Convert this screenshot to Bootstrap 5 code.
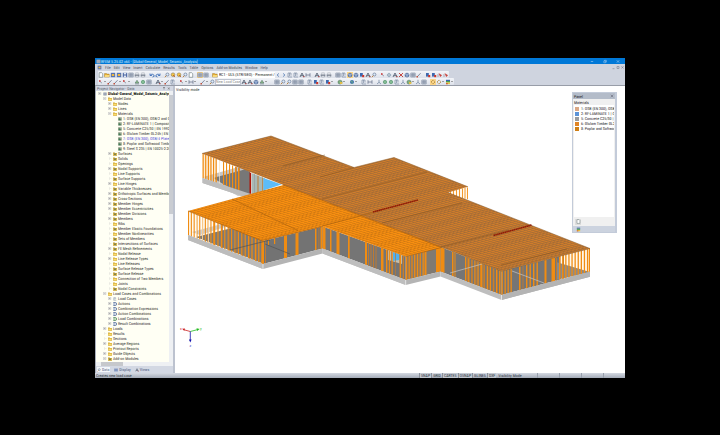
<!DOCTYPE html>
<html lang="en">
<head>
<meta charset="utf-8">
<meta name="viewport" content="width=device-width, initial-scale=1">
<title>RFEM - Seismic Analysis</title>
<link rel="stylesheet" href="https://cdn.jsdelivr.net/npm/bootstrap@5.3.0/dist/css/bootstrap.min.css">
<style>
body{background:#000;font:4px/5px "Roboto Condensed","Noto Sans CJK SC",sans-serif;color:#222;padding:58px 95px 57px;text-rendering:geometricPrecision}
button,select{font:inherit;color:inherit;border:0;background:none;padding:0;display:flex;align-items:center;justify-content:center}
.app-win{background:#cfd4df}
.title-bar{background:#0078d7;color:#d9ecfb;height:6px;padding:0 5px 0 1px}
.title-bar svg{width:5px;height:5px}
.win-btn{width:4px;height:5px}
.win-btns{gap:9px}
.menu-bar{height:7px;padding:0 1px 0 2px;gap:3px;color:#4b5060;white-space:nowrap}
.menu-bar a{color:inherit;text-decoration:none}
.tool-row{height:7px;padding-left:3px}
.tool-strip{background:linear-gradient(#f3f5f9,#dde1ea);height:7px;border-radius:1px}
.tool-btn{width:6px;height:6px}
.tool-btn svg{width:6px;height:6px}
.tool-btn.is-on{background:#fbd58a}
.tool-gap{width:3px}
.tool-arrow{width:3px;height:6px;align-items:center}
.tool-arrow::after{content:"";border:1px solid transparent;border-top-color:#555;margin-top:1px}
.case-select{appearance:none;background:#fff;width:57px;height:6px;line-height:5px;padding-left:1px;overflow:hidden}
.new-select{appearance:none;background:#fff;width:26px;height:6px;color:#888;border:1px solid #bfc4cf;line-height:4px}
.work-row{border-top:1px solid #989da8;min-height:0}
.nav-dock{width:78px;background:#d3d8e3;border-left:1px solid #a9aebb}
.dock-head{height:5px;padding:0 3px 0 1px;color:#555b6b}
.tree-box{background:#fffff4;min-height:0}
.tree{padding:0 0 1px;margin:0;list-style:none;overflow:hidden}
.tree li{flex:1 1 0;min-height:0;white-space:nowrap;overflow:hidden;gap:1px;color:#33332f;padding-left:2px}
.tree .lv1{padding-left:7px}
.tree .lv2{padding-left:12px}
.tree .lv3{padding-left:17px}
.tree svg{width:4px;height:4px;flex:none}
.tree .expander{width:4px;height:3px;flex:none}
.tree .root-item{font-weight:bold;color:#111}
.tree .is-sel{color:#4a46d8}
.v-bar{width:4px;background:#eef0f3}
.v-thumb{background:#c9ccd2;height:119px;margin-top:4px}
.h-bar{height:4px;background:#eef0f3;padding-left:5px}
.h-thumb{background:#c6c8cc;width:22px}
.dock-tabs{height:7px;padding-left:1px;color:#4a5a80;gap:4px}
.dock-tabs svg{width:4px;height:4px;margin-right:1px}
.dock-tabs .on{background:#f4f6fa;padding-right:1px}
.splitter{width:2px;background:#bcc2cf}
.view-area{background:#fff;min-width:0}
.view-note{left:1px;top:1px;color:#333}
.mat-panel{right:8px;top:6px;width:45px;height:141px;background:#f0f0f0;border:1px solid #c3cbd9;border-right-width:2px}
.mat-head{height:6px;background:#b4bcc9;padding:0 1px}
.mat-list{background:#fff;margin:0 1px;padding:1px 0 0 1px;list-style:none;overflow:hidden}
.mat-list li{height:5px;gap:2px;white-space:nowrap}
.mat-label{height:6px;padding-left:1px;line-height:7px}
.swatch{width:4px;height:4px;flex:none}
.sw-a{background:#dba886}.sw-b{background:#5b93d8}.sw-c{background:#989ba0}.sw-d{background:#e08426}.sw-e{background:#cf7f16}
.mat-tools{height:9px;padding-left:2px}
.mat-tools button{width:6px;height:6px;background:#ddd}
.mat-foot{height:6px;background:#ccd3df;padding-left:3px}
.mat-foot svg,.mat-tools svg{width:5px;height:5px}
.status-bar{height:5px;background:linear-gradient(#d5dae2,#a4abb8);color:#333a46;line-height:5px;white-space:nowrap}
.status-bar .hint{width:324px;padding-left:1px}
.status-bar button{border:1px solid #8b919c;border-width:0 0 0 1px;height:5px;padding:0 1px}
.status-bar .down{background:#c3c8d0}
.mode-note{padding-left:2px}
.seg{width:22px;border-left:1px solid #98a0ad;height:5px}
</style>
<script src="https://cdn.jsdelivr.net/npm/bootstrap@5.3.0/dist/js/bootstrap.bundle.min.js"></script>
</head>
<body class="vh-100 overflow-hidden">
<svg class="d-none">
  <symbol id="page" viewBox="0 0 6 6"><path d="M1.2.7h2.5l1 1v3.6H1.2z" fill="#fff" stroke="#677" stroke-width=".6"/></symbol>
  <symbol id="open" viewBox="0 0 6 6"><path d="M.5 1.5h2l.5.6h2.2v3H.5z" fill="#e6ad32" stroke="#947024" stroke-width=".4"/><path d="M1.2 3h4.4l-.8 2.1H.5z" fill="#f8d97a"/></symbol>
  <symbol id="dlubal" viewBox="0 0 6 6"><path d="M.8.8h4.4v4.4H.8z" fill="#5674b4"/><path d="M1.8 2h2.4v2H1.8z" fill="#f0b73c"/></symbol>
  <symbol id="save" viewBox="0 0 6 6"><path d="M.8.8h4.4v4.4H.8z" fill="#45619f"/><path d="M1.8.8h2.4v1.6H1.8zM1.8 3.6h2.4v1.6H1.8z" fill="#dfe6f2"/></symbol>
  <symbol id="print" viewBox="0 0 6 6"><path d="M.7 2.4h4.6v2H.7z" fill="#7d8594"/><path d="M1.7.8h2.6v1.6H1.7zM1.7 3.8h2.6v1.4H1.7z" fill="#f5f7fa" stroke="#6b7382" stroke-width=".3"/></symbol>
  <symbol id="undo" viewBox="0 0 6 6"><path d="M1 1.5v2h2M1.2 3.2Q3 1 4.7 2.8T3.5 5" fill="none" stroke="#3467b4" stroke-width=".8"/></symbol>
  <symbol id="redo" viewBox="0 0 6 6"><path d="M5 1.5v2H3M4.8 3.2Q3 1 1.3 2.8T2.5 5" fill="none" stroke="#3467b4" stroke-width=".8"/></symbol>
  <symbol id="lens" viewBox="0 0 6 6"><circle cx="3.4" cy="2.5" r="1.5" fill="#dbeafa" stroke="#687894" stroke-width=".7"/><path d="M2.3 3.6.9 5.2" stroke="#b7792e" stroke-width=".9"/></symbol>
  <symbol id="lensy" viewBox="0 0 6 6"><circle cx="3" cy="2.7" r="1.8" fill="#f5c743" stroke="#8d7850" stroke-width=".6"/><path d="M3 3l2 2" stroke="#b52" stroke-width=".8"/></symbol>
  <symbol id="grid" viewBox="0 0 6 6"><path d="M.8 1h4.4v4H.8zM.8 2.4h4.4M.8 3.7h4.4M2.3 1v4M3.8 1v4" fill="#e9edf4" stroke="#66748c" stroke-width=".5"/></symbol>
  <symbol id="cube" viewBox="0 0 6 6"><path d="M1 2l2-1 2 1v2.2l-2 1-2-1z" fill="#6683b8" stroke="#3d5076" stroke-width=".4"/><path d="M1 2l2 1 2-1M3 3v2" fill="none" stroke="#dfe8f5" stroke-width=".5"/></symbol>
  <symbol id="cubeg" viewBox="0 0 6 6"><path d="M1 2l2-1 2 1v2.2l-2 1-2-1z" fill="#7fae7f" stroke="#4b6b58" stroke-width=".4"/><path d="M3 3h2.3v2H3z" fill="#e2bd45"/></symbol>
  <symbol id="prev" viewBox="0 0 6 6"><path d="M3.8 1.5 2.2 3l1.6 1.5" fill="none" stroke="#3767aa" stroke-width=".8"/></symbol>
  <symbol id="next" viewBox="0 0 6 6"><path d="M2.2 1.5 3.8 3 2.2 4.5" fill="none" stroke="#3767aa" stroke-width=".8"/></symbol>
  <symbol id="load" viewBox="0 0 6 6"><path d="M1 1v4h4M2.5 1v3M4 1v2.5M1 1h3" fill="none" stroke="#6c7d99" stroke-width=".6"/></symbol>
  <symbol id="bars" viewBox="0 0 6 6"><path d="M1 5 3 1l2 4M1.6 3.7h3" fill="none" stroke="#4a5568" stroke-width=".8"/><path d="M4 4h1.5v1.3H4z" fill="#a55"/></symbol>
  <symbol id="pen" viewBox="0 0 6 6"><path d="M1 5 4.6 1.2" stroke="#69748a" stroke-width=".8"/><path d="M.5 4h1.4v1.4H.5z" fill="#c24a33"/></symbol>
  <symbol id="node" viewBox="0 0 6 6"><path d="M1.5 2 4 4.2" stroke="#456" stroke-width=".5"/><path d="M1 1.2h1.6v1.6H1z" fill="#c33"/></symbol>
  <symbol id="dim" viewBox="0 0 6 6"><path d="M1 1.2v3.6M5 1.2v3.6M1 3h4" stroke="#5e6c85" stroke-width=".7"/></symbol>
  <symbol id="cross" viewBox="0 0 6 6"><path d="M1 1l4 4M5 1 1 5" stroke="#c23931" stroke-width=".9"/></symbol>
  <symbol id="move" viewBox="0 0 6 6"><circle cx="3" cy="3" r="1.5" fill="none" stroke="#6a8ca5" stroke-width=".6"/><path d="M3 .7v4.6M.7 3h4.6" stroke="#8497a8" stroke-width=".4"/></symbol>
  <symbol id="moveg" viewBox="0 0 6 6"><circle cx="3" cy="3" r="1.7" fill="#a9cfa5" stroke="#52906a" stroke-width=".6"/><path d="M3 1v4M1 3h4" stroke="#497" stroke-width=".4"/></symbol>
  <symbol id="supp" viewBox="0 0 6 6"><path d="M3 1.2 4.8 4H1.2zM1 4.9h4" fill="#8fc18a" stroke="#46655f" stroke-width=".5"/></symbol>
  <symbol id="globe" viewBox="0 0 6 6"><circle cx="3" cy="3" r="2" fill="#3b70b0"/><path d="M1.7 2.3h2M2.5 4h1.5" stroke="#7fbf75" stroke-width=".8"/></symbol>
  <symbol id="redbox" viewBox="0 0 6 6"><path d="M1 1h2.8v3.6H1z" fill="#3e69ae"/><path d="M3.2 3h2v2.2h-2z" fill="#cf3428"/></symbol>
  <symbol id="redarr" viewBox="0 0 6 6"><path d="M1.5 1 5 3.2 3.2 5z" fill="#c8433c"/><path d="M1 5V2" stroke="#667" stroke-width=".5"/></symbol>
  <symbol id="gear" viewBox="0 0 6 6"><circle cx="3" cy="3" r="1.6" fill="none" stroke="#a98439" stroke-width="1" stroke-dasharray="1 .5"/></symbol>
  <symbol id="rain" viewBox="0 0 6 6"><path d="M1 .8h4v1.2H1z" fill="#3c62b0"/><path d="M1 2h4v1.500H1z" fill="#4a9f52"/><path d="M1 3.500h4v1.600H1z" fill="#e6c73d"/><path d="M1 4.200h1.800v1H1z" fill="#cf4334"/></symbol>
  <symbol id="axes" viewBox="0 0 6 6"><path d="M3 .8V3.3L1 5M3 3.3 5 5" fill="none" stroke="#697e9b" stroke-width=".7"/></symbol>
  <symbol id="folder" viewBox="0 0 4 4"><path d="M.1.6h1.5l.4.5h1.9v2.6H.1z" fill="#c99c28"/><path d="M.3 1.5h3.4v1.9H.3z" fill="#f9dc6d"/></symbol>
  <symbol id="folderx" viewBox="0 0 4 4"><path d="M.1.6h1.5l.4.5h1.9v2.6H.1z" fill="#b98f28"/><path d="M.3 1.5h3.4v1.9H.3z" fill="#eacb58"/><path d="M1.2 1.6h1.6v1.4H1.2z" fill="#61704a"/></symbol>
  <symbol id="mat" viewBox="0 0 4 4"><path d="M.2.3h3.5v3.3H.2z" fill="#829079"/><path d="M.7 1.6h1.8v1.6H.7z" fill="#3c7f56"/><path d="M2.4.6h1v1h-1z" fill="#cfd6cc"/></symbol>
  <symbol id="bracket" viewBox="0 0 4 4"><path d="M.3.5h1.8q1.5 0 1.5 1.5T2.1 3.5H.3M.3 2h1.5" fill="#e4ecf6" stroke="#3f5a8c" stroke-width=".7"/></symbol>
  <symbol id="bracketg" viewBox="0 0 4 4"><path d="M.3.5h1.8q1.5 0 1.5 1.5T2.1 3.5H.3M.3 2h1.5" fill="#d9ecd2" stroke="#3f7a4c" stroke-width=".7"/></symbol>
</svg>

<div class="app-win d-flex flex-column h-100">
  <header class="title-bar d-flex align-items-center justify-content-between flex-shrink-0">
    <div class="d-flex align-items-center"><svg><use href="#grid"/></svg><span>RFEM 5.25.02 x64 - [Dlubal-General_Model_Seismic_Analysis]</span></div>
    <div class="win-btns d-flex">
      <button class="win-btn" aria-label="Minimize"><svg viewBox="0 0 5 5"><path d="M1 2.5h3" stroke="#cfe6fa" stroke-width=".6"/></svg></button>
      <button class="win-btn" aria-label="Restore"><svg viewBox="0 0 5 5"><path d="M1 1.8h2.3v2.3H1zM1.8 1.8V1h2.4v2.3h-.8" fill="none" stroke="#cfe6fa" stroke-width=".5"/></svg></button>
      <button class="win-btn" aria-label="Close"><svg viewBox="0 0 5 5"><path d="M1 1l3 3M4 1 1 4" stroke="#cfe6fa" stroke-width=".6"/></svg></button>
    </div>
  </header>
  <nav class="menu-bar d-flex align-items-center flex-shrink-0">
    <svg width="5" height="5"><use href="#dlubal"/></svg>
    <a href="#">File</a><a href="#">Edit</a><a href="#">View</a><a href="#">Insert</a><a href="#">Calculate</a><a href="#">Results</a><a href="#">Tools</a><a href="#">Table</a><a href="#">Options</a><a href="#">Add-on Modules</a><a href="#">Window</a><a href="#">Help</a>
    <svg class="ms-auto" width="12" height="5" viewBox="0 0 12 5"><path d="M.5 3.7h2M5 1.5h2v2H5zM9.5 1.3l2 2.2M11.5 1.3l-2 2.2" fill="none" stroke="#6b7282" stroke-width=".5"/></svg>
  </nav>
  <div class="tool-row d-flex flex-shrink-0"><div class="tool-strip d-flex align-items-center" id="tools-a"></div></div>
  <div class="tool-row d-flex flex-shrink-0"><div class="tool-strip d-flex align-items-center" id="tools-b"></div></div>

  <main class="work-row d-flex flex-fill">
    <aside class="nav-dock d-flex flex-column flex-shrink-0">
      <div class="dock-head d-flex justify-content-between flex-shrink-0"><span>Project Navigator - Data</span><svg width="8" height="5" viewBox="0 0 8 5"><path d="M1 1.5h2M2 1.5v2M6 1.5l1.6 2M7.6 1.5l-1.6 2" stroke="#555" stroke-width=".5"/></svg></div>
      <div class="tree-box d-flex flex-fill">
        <ul class="tree d-flex flex-column flex-fill" id="tree"></ul>
        <div class="v-bar flex-shrink-0"><div class="v-thumb"></div></div>
      </div>
      <div class="h-bar d-flex flex-shrink-0"><div class="h-thumb"></div></div>
      <div class="dock-tabs d-flex align-items-center flex-shrink-0">
        <button class="on"><svg><use href="#lens"/></svg>Data</button>
        <button><svg><use href="#save"/></svg>Display</button>
        <button><svg><use href="#bars"/></svg>Views</button>
      </div>
    </aside>
    <div class="splitter flex-shrink-0"></div>
    <section class="view-area position-relative flex-fill">
      <svg class="d-block w-100 h-100" viewBox="175 86 450 287" id="model">
        <defs>
          <pattern id="roofA" width="4" height="4" patternUnits="userSpaceOnUse" patternTransform="matrix(.97 -.25 .75 .29 202 153)">
            <path d="M0 0h4v4H0z" fill="#d07d2a"/><path d="M0 0h4v1.6H0z" fill="#a16b37"/><path d="M0 0h1v4H0z" fill="#b27133"/>
          </pattern>
          <pattern id="roofB" width="4" height="4" patternUnits="userSpaceOnUse" patternTransform="matrix(.97 -.25 .75 .29 188 210)">
            <path d="M0 0h4v4H0z" fill="#f98f10"/><path d="M0 0h4v1.3H0z" fill="#cd7712"/><path d="M0 0h1v4H0z" fill="#dd8010"/>
          </pattern>
        </defs>
        <g id="walls"></g>
        <path d="M202 153.500 271 136 354 167.500 394 157.500 468 186.800 448 192.500 590 248.500 501.500 271 441.500 247 430 249 278 189 283.500 185z" fill="url(#roofA)"/>
        <path d="M188 211 283.500 185 442 247.500 405.500 256.500 322.500 226.500 262.500 241z" fill="url(#roofB)"/>
        <g fill="none" stroke="#81501f" stroke-width=".5">
          <path d="M202 153.500 271 136l83 31.500 40-10 74 29.300M448 192.500l142 56-88.500 22.500-60-24"/>
          <path d="M283 166l42-11M322 199l105-27M382 223l80-20M441 247l68-17M320 177l34-9.500M501 265l66-16"/>
        </g>
        <g fill="none" stroke="#a75e0c" stroke-width=".6">
          <path d="M188 211l74.500 30M232 199l66 31.500M283.500 185l158 62.500M322.500 226.500l-60 14M405.500 256.500l36-9M322 226l60-16"/>
        </g>
        <path d="M373 212l45-12M493.500 235.500l38-10.500" stroke="#8f1b08" stroke-width="1.600" stroke-dasharray="1.600 .3"/>
        <g font-size="4" stroke-width=".8">
          <path d="M190.300 331.500 183 329.500" stroke="#c22"/><path d="M185 328.600l-3 .2 2.300 2z" fill="#c22"/>
          <path d="M190.300 331.500 198 329.500" stroke="#2b2"/><path d="M196.500 328.300l3.200.8-2.600 1.800z" fill="#2b2"/>
          <path d="M190.300 331.500V341" stroke="#11a"/><path d="M189 339.500h2.600l-1.300 3z" fill="#11a"/>
          <text x="180" y="330" fill="#c22">x</text><text x="200" y="330" fill="#2b2">y</text><text x="189.500" y="347" fill="#33b">z</text>
        </g>
      </svg>
      <div class="view-note position-absolute">Visibility mode</div>
      <div class="mat-panel position-absolute d-flex flex-column">
        <div class="mat-head d-flex align-items-center justify-content-between"><span>Panel</span><svg width="4" height="4" viewBox="0 0 4 4"><path d="M.8.8l2.400 2.400M3.200.8.8 3.200" stroke="#556" stroke-width=".5"/></svg></div>
        <div class="mat-label">Materials</div>
        <ul class="mat-list flex-fill">
          <li class="d-flex align-items-center"><span class="swatch sw-a"></span>1: OSB (EN 300), OSB/2</li>
          <li class="d-flex align-items-center"><span class="swatch sw-b"></span>2: RF-LAMINATE 1 | Con</li>
          <li class="d-flex align-items-center"><span class="swatch sw-c"></span>5: Concrete C25/30 | EN</li>
          <li class="d-flex align-items-center"><span class="swatch sw-d"></span>6: Glulam Timber GL24h</li>
          <li class="d-flex align-items-center"><span class="swatch sw-e"></span>8: Poplar and Softwood</li>
        </ul>
        <div class="mat-tools d-flex align-items-center"><button aria-label="Panel options"><svg><use href="#page"/></svg></button></div>
        <div class="mat-foot d-flex align-items-center"><svg><use href="#rain"/></svg></div>
      </div>
    </section>
  </main>
  <footer class="status-bar d-flex flex-shrink-0">
    <span class="hint">Creates new load case</span>
    <button class="down">SNAP</button><button>GRID</button><button class="down">CARTES</button><button class="down">OSNAP</button><button>GLINES</button><button class="down">DXF</button>
    <span class="mode-note">Visibility Mode</span>
    <span class="ms-auto d-flex"><i class="seg"></i><i class="seg"></i><i class="seg"></i><i class="seg"></i></span>
  </footer>
</div>
<script>
const icon = n => `<svg aria-hidden="true"><use href="#${n}"/></svg>`;
const caseBox = '<select class="case-select" aria-label="Load case"><option>RC1 - ULS (STR/GEO) - Permanent / Tran</option></select>';
const newBox = '<select class="new-select" aria-label="New load case"><option>New Load Case</option></select>';
function strip(id, spec) {
  document.getElementById(id).innerHTML = spec.split(' ').map(t =>
    t === '|' ? '<span class="tool-gap"></span>' :
    t === ',' ? '<span class="tool-arrow d-flex"></span>' :
    t === 'CASE' ? caseBox : t === 'NEW' ? newBox :
    `<button class="tool-btn${t.startsWith('*') ? ' is-on' : ''}" aria-label="${t.replace('*', '')}">${icon(t.replace('*', ''))}</button>`).join('');
}
strip('tools-a', 'page open dlubal dlubal save grid print print | undo redo | lens lensy lensy lens page | *grid grid | open CASE prev next load load bars dim | bars print print | grid load *cube cube redbox bars lens | node move bars cross cube grid pen | redbox redbox redarr redarr');
strip('tools-b', 'node , pen pen , node , | supp moveg grid | bars , pen load | node , dim , | pen , lens NEW bars bars cube supp , | | grid lens lens grid grid | load redbox load redbox , | cubeg , | globe , | load dim | axes moveg moveg load axes cubeg , axes grid | *gear gear , rain ,');

const rows = `0+grid Dlubal-General_Model_Seismic_Analysis
1-folder Model Data
2+folder Nodes
2+folder Lines
2-folder Materials
3.mat 1: OSB (EN 300), OSB/2 and OS
3.mat 2: RF-LAMINATE 1 | Composit
3.mat 5: Concrete C25/30 | EN 1992-
3.mat 6: Glulam Timber GL24h | EN 1
3.mat 7: OSB (EN 300), OSB/4 Plate S
3.mat 8: Poplar and Softwood Timbe
3.mat 9: Steel S 235 | EN 10025-2:200
2+folderx Surfaces
2.folderx Solids
2.folder Openings
2+folderx Nodal Supports
2.folder Line Supports
2.folderx Surface Supports
2+folder Line Hinges
2.folderx Variable Thicknesses
2+folderx Orthotropic Surfaces and Membra
2+folderx Cross-Sections
2+folderx Member Hinges
2+folderx Member Eccentricities
2.folderx Member Divisions
2+folderx Members
2.folder Ribs
2.folderx Member Elastic Foundations
2.folder Member Nonlinearities
2.folderx Sets of Members
2.folderx Intersections of Surfaces
2+folderx FE Mesh Refinements
2.folder Nodal Release
2+folder Line Release Types
2.folder Line Releases
2.folderx Surface Release Types
2.folderx Surface Release
2.folder Connection of Two Members
2.folder Joints
2.folderx Nodal Constraints
1-folder Load Cases and Combinations
2+load Load Cases
2+bracket Actions
2+bracket Combination Expressions
2+bracket Action Combinations
2+bracketg Load Combinations
2+bracket Result Combinations
1+folder Loads
1.folder Results
1.folder Sections
1+folder Average Regions
1.folder Printout Reports
1+folder Guide Objects
1-folderx Add-on Modules`.split('\n');
document.getElementById('tree').innerHTML = rows.map(r => {
  const m = r.match(/^(\d)([-+.])(\w+) (.*)$/);
  const mark = m[2] === '.' ? '<path d="M1.500 0v3M1.500 1.500h2" stroke="#ccc" stroke-width=".3"/>'
    : '<path d="M.4.3h2.400v2.400H.4z" fill="#fff" stroke="#9a9a9a" stroke-width=".4"/><path d="M1 1.500h1.200' + (m[2] === '+' ? 'M1.600.9v1.200' : '') + '" stroke="#555" stroke-width=".3"/>';
  const cls = (m[1] === '0' ? ' root-item' : '') + (m[4].startsWith('7:') ? ' is-sel' : '');
  return `<li class="d-flex align-items-center lv${m[1]}${cls}"><svg class="expander" viewBox="0 0 4 3">${m[1] === '3' ? '' : mark}</svg>${icon(m[3])}<span>${m[4]}</span></li>`;
}).join('');

// Walls: a = [x, roofY, slabY] at the start, b at the end, studs = [x, width, tone]
const tones = { o: '#f08c12', d: '#bd7a33', w: '#fbe2bd', g: '#9aa0a0', r: '#b01508' };
function wall(a, b, fills, studs, slab) {
  const at = (x, k) => a[k] + (b[k] - a[k]) * (x - a[0]) / (b[0] - a[0]);
  const quad = (x1, x2, c) => `<path d="M${x1} ${at(x1, 1)}L${x2} ${at(x2, 1)}V${at(x2, 2)}L${x1} ${at(x1, 2)}z" fill="${c}"/>`;
  return fills.map(f => quad(...f)).join('') + studs.map(s => quad(s[0], s[0] + s[1], tones[s[2]])).join('') +
    `<path d="M${a[0]} ${a[2]}L${b[0]} ${b[2]}v5L${a[0]} ${a[2] + 5}z" fill="${slab}"/>`;
}
const run = (x1, x2, step, w, t) => { const o = []; for (let x = x1; x < x2; x += step) o.push([x, w, t]); return o; };
let g = '';
g += '<path d="M424 182l44 5v12l-20-6z" fill="#fff8ee"/>';
[450, 453, 456, 459, 462, 464.5, 467].forEach(x => g += `<path d="M${x} ${191 - (x - 449) * .2}h1v${(x - 445) * .45 + 2}h-1z" fill="#f39a2c"/>`);
g += wall([202.5, 153.5, 178], [284, 186, 205], [[202.5, 284, '#fff']], [], '#bdbdbd');
g += '<path d="M203 177l46-13v30l-11 2z" fill="#c7c7c7"/><path d="M213 178l37-10v26l-10 0z" fill="#777"/>';
g += wall([202.5, 153.5, 178], [284, 186, 205], [[251.5, 265, '#a8b9b6']], [...run(202.5, 218, 2.6, 1.3, 'o'), ...run(204, 222, 5, .7, 'w'), ...run(223, 240, 3, 1.1, 'o'), ...run(236, 241, 3, .8, 'd'), [249.5, 1.6, 'r'], [254, .8, 'g'], [257.5, 1, 'd'], [262, .7, 'd']], '#bdbdbd');
g += '<path d="M263.500 178l18 6.500-18 6z" fill="#5cbcf8"/>';
g += wall([188, 211, 235], [263, 241, 264], [[188, 263, '#fffaf2']], [], '#bcbcbc');
g += '<path d="M196 237l36-9 31 8v27.500z" fill="#7b7a78"/><path d="M200 235l25-8v-4l-33 9z" fill="#cfcfcf"/>';
g += wall([188, 211, 235], [263, 241, 264], [], [...run(188, 214, 2.8, 1.1, 'o'), ...run(190, 212, 6, .7, 'w'), ...run(214, 263, 3.4, 1.2, 'o'), ...run(222, 262, 6.8, .8, 'd'), [261.5, 1.5, 'o']], '#bcbcbc');
g += wall([263, 241, 264], [322.5, 226.5, 248.5], [[263, 322.5, '#737373']], [[263, 1, 'o'], [265, 1, 'd'], [284, 3, 'o'], [295.5, 3, 'o'], [315, 1.5, 'o'], [318.5, .8, 'd'], [320.5, 2, 'o']], '#b4b4b4');
g += '<path d="M268 239v6h1v-6zM274 238v6h1.200v-6z" fill="#f08c12"/><path d="M230 250l40-10M265 244l25 10" stroke="#4e4e4e" stroke-width=".6"/>';
g += wall([322.5, 226.5, 248.5], [405.7, 256.5, 280], [[322.5, 405.7, '#757575']], [], '#bebebe');
g += '<path d="M388 250l14 5v9l-14-4z" fill="#c5bfae"/><path d="M393 252l8 3-2 5-6 1z" fill="#4fb1ee"/>';
g += wall([322.5, 226.5, 248.5], [405.7, 256.5, 280], [], [[322.5, 3, 'o'], [330, 1.5, 'o'], [336.5, 3, 'o'], [348, 1.7, 'o'], [365, 2, 'o'], ...run(368, 378, 2.5, 1, 'd'), [381, 2.5, 'o'], ...run(386, 393, 2.8, 1.1, 'o'), ...run(400, 405, 2.8, 1.1, 'o'), ...run(387, 404, 4, .7, 'd')], '#bebebe');
g += wall([405.7, 256.5, 280], [440.5, 247, 271.5], [[405.7, 440.5, '#807a72']], [...run(405.7, 424, 2.8, 1.3, 'o'), ...run(407.5, 422, 4, .8, 'd'), [424.5, 2, 'o'], [436, 4.5, 'o']], '#b4b4b4');
g += wall([440.5, 247, 271.5], [501.5, 271, 295], [[440.5, 501.5, '#757575']], [[440.5, 4, 'o'], [452, 1.5, 'o'], [454.5, 1, 'o'], ...run(465, 501, 3.1, 1.3, 'o'), ...run(467, 500, 4.3, .9, 'd'), [480.5, 2, 'o']], '#bebebe');
g += wall([501.5, 271, 295], [590, 248.5, 271.7], [[501.5, 560, '#757575'], [560, 590, '#fff7ea']], [], '#b4b4b4');
g += '<path d="M556 262l34 10-34 8z" fill="#8a8a8a"/>';
g += wall([501.5, 271, 295], [590, 248.5, 271.7], [], [...run(501.5, 512, 3, 1.3, 'o'), [519, 1.5, 'o'], [522.5, 1, 'd'], ...run(526, 538, 3.5, 1.4, 'o'), [544.5, 2, 'o'], [551.5, 3.5, 'o'], ...run(556, 566, 3.5, 1, 'd'), ...run(559, 588, 3.1, 1.3, 'o'), [588.8, 1.2, 'o']], '#b4b4b4');
g += '<path d="M450 273l32-9M512 271l32 12" stroke="#c4c4c4" stroke-width=".7"/><path d="M263 264v5M405.700 280v6M501.500 295v5" stroke="#fff" stroke-width=".6"/>';
document.getElementById('walls').innerHTML = g;
</script>
</body>
</html>
